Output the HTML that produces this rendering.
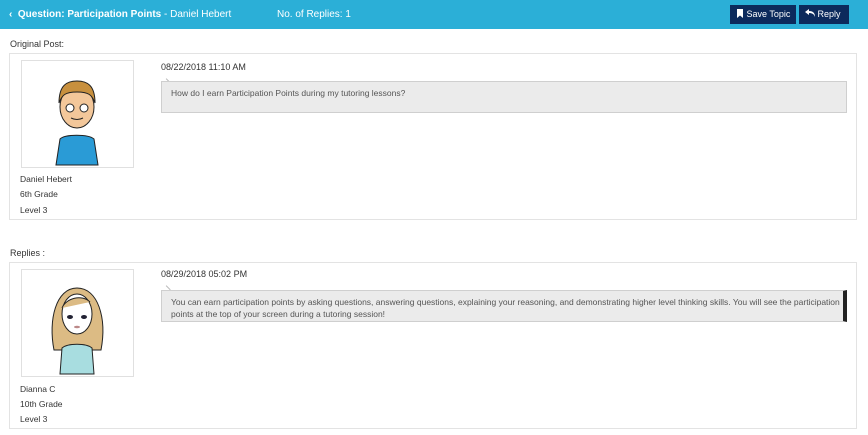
<!DOCTYPE html>
<html><head><meta charset="utf-8"><style>
*{box-sizing:border-box;margin:0;padding:0}
body{width:868px;height:435px;background:#fff;font-family:"Liberation Sans",sans-serif;color:#333;position:relative;overflow:hidden;font-size:9px}
.hdr{position:absolute;left:0;top:0;width:868px;height:29px;background:#2bafd7;color:#fff;font-size:10px}
.hdr .t{position:absolute;left:9px;top:9px}
.hdr .n{position:absolute;left:277px;top:9px}
.btn{position:absolute;top:5px;height:19px;background:#0c2a5c;color:#fff;font-size:9px;line-height:19px;padding-left:6px}
.lbl{position:absolute;left:10px;font-size:9px;color:#333}
.box{position:absolute;left:9px;width:848px;height:167px;border:1px solid #e3e3e3}
.av{position:absolute;left:11px;width:113px;height:108px;border:1px solid #e0e0e0}
.nm{position:absolute;left:10px;font-size:8.5px;color:#333}
.dt{position:absolute;left:151px;font-size:9px;color:#333}
.ta{position:absolute;left:151px;width:686px;border:1px solid #cfcfcf;background:#ebebeb;font-size:8.5px;color:#555;padding:5px 9px;line-height:12px;white-space:nowrap;overflow:hidden}
.tip{position:absolute;left:157px;width:6px;height:6px;border-left:1px solid #bbb;transform:rotate(-45deg)}
</style></head><body>
<div class="hdr"><div class="t"><b>&#8249;&nbsp; Question: Participation Points</b> - Daniel Hebert</div><div class="n">No. of Replies: 1</div>
<div class="btn" style="left:730px;width:66px"><svg width="8" height="9" style="vertical-align:-1px"><path d="M1 0h6v9L4 6.5 1 9z" fill="#fff"/></svg> Save Topic</div>
<div class="btn" style="left:799px;width:50px"><svg width="10" height="8" style="vertical-align:0"><path d="M0 3L4 0v2c4 0 6 2 6 6C9 5 7 4 4 4v2z" fill="#fff"/></svg> Reply</div>
</div>
<div class="lbl" style="top:39px">Original Post:</div>
<div class="box" style="top:53px">
<div class="av" style="top:6px"><svg width="111" height="106" viewBox="0 0 111 106">
<ellipse cx="55" cy="46" rx="17" ry="21" fill="#f3c79a" stroke="#222"/><path d="M37 42c0-18 8-22 18-22s18 4 18 22c-3-8-6-11-18-11s-15 3-18 11z" fill="#c8903e" stroke="#222"/>
<circle cx="48" cy="47" r="4" fill="#fff" stroke="#222"/><circle cx="62" cy="47" r="4" fill="#fff" stroke="#222"/><path d="M49 57q6 3 12 0" stroke="#222" fill="none"/>
<path d="M34 104l4-26c5-5 28-5 34 0l4 26z" fill="#2a9bd6" stroke="#222"/></svg></div>
<div class="nm" style="top:120px">Daniel Hebert</div><div class="nm" style="top:135px">6th Grade</div><div class="nm" style="top:151px">Level 3</div>
<div class="dt" style="top:8px">08/22/2018 11:10 AM</div><div class="tip" style="top:22px"></div>
<div class="ta" style="top:27px;height:32px">How do I earn Participation Points during my tutoring lessons?</div>
</div>
<div class="lbl" style="top:248px">Replies :</div>
<div class="box" style="top:262px">
<div class="av" style="top:6px"><svg width="111" height="106" viewBox="0 0 111 106">
<path d="M32 80c-6-30 2-62 23-62s30 30 24 62z" fill="#dcbb84" stroke="#222"/><ellipse cx="55" cy="44" rx="15" ry="20" fill="#fff" stroke="#222"/>
<path d="M40 38c4-10 20-14 28-6" fill="#dcbb84" stroke="#222"/><ellipse cx="48" cy="47" rx="3" ry="2" fill="#223"/><ellipse cx="62" cy="47" rx="3" ry="2" fill="#223"/><ellipse cx="55" cy="57" rx="3" ry="1.3" fill="#b88"/>
<path d="M38 104l2-26c6-5 24-5 30 0l2 26z" fill="#a8dde0" stroke="#222"/></svg></div>
<div class="nm" style="top:121px">Dianna C</div><div class="nm" style="top:136px">10th Grade</div><div class="nm" style="top:151px">Level 3</div>
<div class="dt" style="top:6px">08/29/2018 05:02 PM</div><div class="tip" style="top:20px"></div>
<div class="ta" style="top:27px;height:32px;border-right:4px solid #222">You can earn participation points by asking questions, answering questions, explaining your reasoning, and demonstrating higher level thinking skills. You will see the participation<br>points at the top of your screen during a tutoring session!</div>
</div>
</body></html>
